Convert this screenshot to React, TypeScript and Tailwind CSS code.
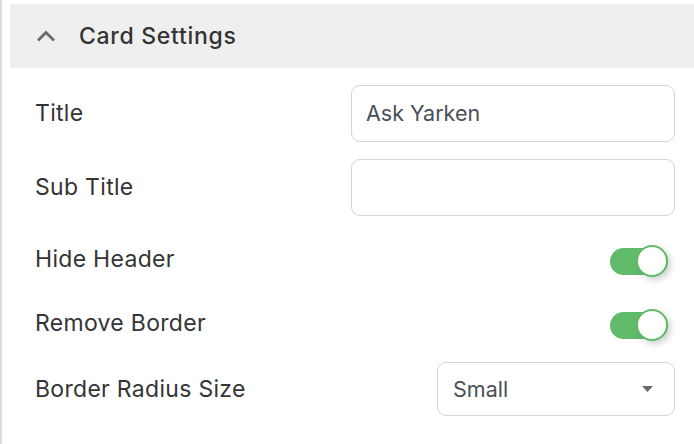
import React from "react";

function Toggle() {
  return (
    <div className="relative w-[58px] h-[32px] mr-[7px] flex items-center">
      <div className="w-[58px] h-[27px] rounded-full bg-[#62bb6a]" />
      <div className="absolute right-0 top-0 w-[32px] h-[32px] rounded-full bg-white border-[2px] border-[#62bb6a] shadow-[3px_3px_6px_rgba(0,0,0,0.18)]" />
    </div>
  );
}

export default function App() {
  const font = { fontFamily: "Inter, 'Noto Sans', sans-serif" };
  return (
    <div className="min-h-[444px] w-[694px] bg-white border-l-2 border-[#dcdcdc]" style={font}>
      <div className="pt-[4px] pl-[8px]">
        <div className="h-[64px] bg-[#efefef] flex items-center pl-[26px]">
          <svg width="20" height="12" viewBox="0 0 20 12" className="mt-[-1px]">
            <path d="M2 10.5 L10 2.5 L18 10.5" fill="none" stroke="#6b6b6b" strokeWidth="2.8" />
          </svg>
          <span className="ml-[23px] text-[23px] font-medium text-[#333333] leading-none tracking-[0.7px]">
            Card Settings
          </span>
        </div>
      </div>
      <div className="pl-[33px] pr-[19px] pt-[17px] text-[#353535] text-[23px] tracking-[0.3px]">
        <div className="flex items-center justify-between h-[57px]">
          <span>Title</span>
          <div className="w-[324px] h-[57px] rounded-[9px] border-[1.5px] border-[#d2d5da] flex items-center px-[14px] text-[#4a4f57] text-[21.5px] tracking-normal">
            Ask Yarken
          </div>
        </div>
        <div className="flex items-center justify-between h-[57px] mt-[17px]">
          <span>Sub Title</span>
          <div className="w-[324px] h-[57px] rounded-[9px] border-[1.5px] border-[#d2d5da]" />
        </div>
        <div className="flex items-center justify-between h-[32px] mt-[29px]">
          <span className="mt-[-4px]">Hide Header</span>
          <Toggle />
        </div>
        <div className="flex items-center justify-between h-[32px] mt-[32px]">
          <span className="mt-[-4px]">Remove Border</span>
          <Toggle />
        </div>
        <div className="flex items-center justify-between h-[54px] mt-[21px]">
          <span>Border Radius Size</span>
          <div className="w-[238px] h-[54px] rounded-[9px] border-[1.5px] border-[#d2d5da] flex items-center justify-between pl-[15px] pr-[21px] text-[#4a4f57] text-[21.5px] tracking-normal">
            <span>Small</span>
            <svg width="11" height="6" viewBox="0 0 11 6">
              <path d="M0 0 L11 0 L5.5 6 Z" fill="#6b6b6b" />
            </svg>
          </div>
        </div>
      </div>
    </div>
  );
}
